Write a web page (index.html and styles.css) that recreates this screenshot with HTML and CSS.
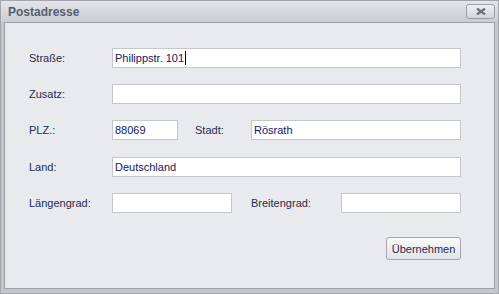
FILE: index.html
```html
<!DOCTYPE html>
<html lang="de">
<head>
  <meta charset="UTF-8" />
  <title>Postadresse</title>
  <link rel="stylesheet" href="styles.css">
</head>
<body>
  <div class="window">
    <div class="titlebar">
      <span class="title">Postadresse</span>
      <button class="close-btn">
        <svg width="10" height="7" viewBox="0 0 10 7">
          <path d="M1 0.5 L9 6.5 M9 0.5 L1 6.5" stroke="#6e6f7c" stroke-width="2.2" fill="none"/>
        </svg>
      </button>
    </div>

    <div class="panel">
      <div class="row">
        <label class="lbl">Straße:</label>
        <div class="field grow">Philippstr. 101<span class="caret"></span></div>
      </div>
      <div class="row">
        <label class="lbl">Zusatz:</label>
        <div class="field grow"></div>
      </div>
      <div class="row">
        <label class="lbl">PLZ.:</label>
        <div class="field plz">88069</div>
        <label class="lbl lbl-stadt">Stadt:</label>
        <div class="field grow">Rösrath</div>
      </div>
      <div class="row row-land">
        <label class="lbl">Land:</label>
        <div class="field grow">Deutschland</div>
      </div>
      <div class="row">
        <label class="lbl">Längengrad:</label>
        <div class="field coord"></div>
        <label class="lbl lbl-breite">Breitengrad:</label>
        <div class="field coord"></div>
      </div>
      <div class="actions">
        <button class="btn">Übernehmen</button>
      </div>
    </div>
  </div>
</body>
</html>
```

FILE: styles.css
```css
body {
  margin: 0;
  font-family: "Liberation Sans", Arial, sans-serif;
  font-size: 11px;
  background: #c4c5cb;
}
.window {
  width: 499px;
  height: 294px;
  box-sizing: border-box;
  border: 1px solid #a3a4ac;
  background: #c5c6cc;
  display: flex;
  flex-direction: column;
}
.titlebar {
  height: 21px;
  display: flex;
  align-items: center;
  justify-content: space-between;
  padding: 0 3px 0 7px;
  background: linear-gradient(#e4e5ea, #cbccd2);
}
.title {
  font-size: 12px;
  font-weight: bold;
  color: #585d70;
  margin-top: 1px;
}
.close-btn {
  width: 29px;
  height: 15px;
  margin-top: 0;
  padding: 0;
  border: 1px solid #9c9da5;
  border-radius: 3px;
  background: linear-gradient(#eeeff2, #d4d5da);
  display: flex;
  align-items: center;
  justify-content: center;
}
.panel {
  flex: 1;
  margin: 0 3px 4px 3px;
  border: 1px solid #9fa0a8;
  background: #e9eaee;
  padding: 25px 33px 0 24px;
  display: flex;
  flex-direction: column;
  gap: 16px;
}
.row {
  display: flex;
  align-items: center;
  height: 20px;
}
.row-land {
  margin-top: 1px;
}
.lbl {
  width: 83px;
  flex-shrink: 0;
  color: #1f2a4c;
}
.lbl-stadt {
  width: 56px;
  margin-left: 17px;
}
.lbl-breite {
  width: 90px;
  margin-left: 19px;
}
.field {
  height: 20px;
  box-sizing: border-box;
  border: 1px solid #c6c7cd;
  background: #fff;
  color: #15185a;
  padding: 0 2px;
  line-height: 18px;
  white-space: nowrap;
}
.grow {
  flex: 1;
}
.plz {
  width: 66px;
}
.coord {
  width: 120px;
}
.caret {
  display: inline-block;
  width: 1px;
  height: 14px;
  background: #000;
  vertical-align: -3px;
  margin-left: 1px;
}
.actions {
  display: flex;
  justify-content: flex-end;
  margin-top: 8px;
}
.btn {
  width: 75px;
  height: 23px;
  padding: 0;
  font-family: "Liberation Sans", Arial, sans-serif;
  font-size: 11px;
  color: #1f2a4c;
  border: 1px solid #a5a6ad;
  border-radius: 3px;
  background: linear-gradient(#fafafb, #e2e3e7);
}
```
